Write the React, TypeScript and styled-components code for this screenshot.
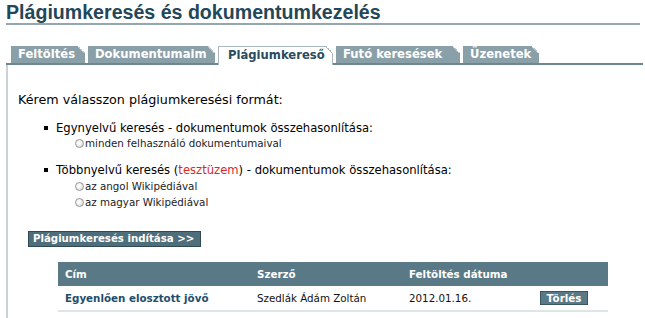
import styled, { createGlobalStyle } from "styled-components";

const GlobalStyle = createGlobalStyle`
  body {
    margin: 0;
    background: #fff;
    color: #000;
    font-family: "DejaVu Sans", Verdana, sans-serif;
  }
`;

const Page = styled.div`
  width: 645px;
  height: 318px;
  overflow: hidden;
`;

const Title = styled.h1`
  margin: 2px 5px 0 6px;
  font: bold 19.6px/21px "Liberation Sans", Arial, sans-serif;
  color: #234659;
  border-bottom: 2px solid #93a7af;
`;

const TabBar = styled.div`
  display: flex;
  align-items: flex-end;
  gap: 3px;
  margin: 21px 2px 0 6px;
  padding-left: 5px;
  height: 17px;
  border-bottom: 2px solid #6d8791;
`;

const Tab = styled.div<{ $active?: boolean; $width: number }>`
  position: relative;
  box-sizing: border-box;
  width: ${(p) => p.$width}px;
  height: ${(p) => (p.$active ? "19px" : "17px")};
  margin-bottom: ${(p) => (p.$active ? "-2px" : "0")};
  padding: ${(p) => (p.$active ? "0 0 1px 9px" : "0 0 0 7px")};
  line-height: ${(p) => (p.$active ? "16px" : "17px")};
  font-size: 11.6px;
  font-weight: bold;
  color: ${(p) => (p.$active ? "#2b4b5c" : "#fff")};
  background: ${(p) => (p.$active ? "#fff" : "#8aa0a8")};
  border: ${(p) => (p.$active ? "1px solid #a9b8be" : "none")};
  border-bottom: none;
  white-space: nowrap;

  &::after {
    content: "";
    position: absolute;
    top: ${(p) => (p.$active ? "-1px" : "0")};
    right: ${(p) => (p.$active ? "-1px" : "0")};
    width: 7px;
    height: 7px;
    background: linear-gradient(
      to bottom left,
      #fff 50%,
      ${(p) => (p.$active ? "#a9b8be" : "#b7c5ca")} 50%,
      ${(p) => (p.$active ? "#a9b8be" : "#b7c5ca")} calc(50% + 1px),
      transparent calc(50% + 1px)
    );
  }
`;

const Panel = styled.div`
  margin-left: 6px;
  border-left: 2px solid #c9d3d7;
  padding: 27px 0 20px 10px;
  min-height: 240px;
`;

const Intro = styled.p`
  margin: 0;
  font-size: 12.7px;
  line-height: 15px;
`;

const OptionList = styled.ul`
  list-style: none;
  margin: 13px 0 0 26px;
  padding: 0;
`;

const Option = styled.li`
  margin-bottom: 11px;
`;

const OptionHead = styled.div`
  display: flex;
  align-items: center;
  height: 15px;
  font-size: 11.6px;
`;

const Bullet = styled.span`
  width: 4px;
  height: 4px;
  margin-right: 8px;
  background: #000;
`;

const Test = styled.span`
  color: #d42a2a;
`;

const RadioGroup = styled.div<{ $offset?: number }>`
  padding-top: ${(p) => p.$offset ?? 0}px;
`;

const RadioRow = styled.label`
  display: flex;
  align-items: center;
  gap: 1px;
  height: 16px;
  margin-left: 31px;
  font-size: 10.3px;
  color: #222;
`;

const Radio = styled.input`
  appearance: none;
  box-sizing: border-box;
  width: 9px;
  height: 9px;
  margin: 0;
  border-radius: 50%;
  border: 1px solid #969696;
  background: radial-gradient(circle at 40% 40%, #fff 0, #f0f0f0 45%, #c8c8c8 100%);
`;

const StartButton = styled.button`
  display: block;
  box-sizing: border-box;
  height: 16px;
  margin: 21px 0 0 10px;
  padding: 0 6px 0 4px;
  font-family: "DejaVu Sans", Verdana, sans-serif;
  font-size: 10.2px;
  font-weight: bold;
  line-height: 14px;
  color: #fff;
  background: #4e6e7b;
  border: 1px solid #2f4a55;
  border-radius: 0;
`;

const Table = styled.div`
  width: 550px;
  margin: 15px 0 0 40px;
`;

const Row = styled.div<{ $head?: boolean }>`
  display: grid;
  grid-template-columns: 192px 152px 131px 75px;
  align-items: center;
  height: 24px;
  font-size: 10.3px;
  font-weight: ${(p) => (p.$head ? "bold" : "normal")};
  color: ${(p) => (p.$head ? "#fff" : "#111")};
  background: ${(p) => (p.$head ? "#587985" : "#fff")};
  border-bottom: ${(p) => (p.$head ? "none" : "2px solid #dfe4e6")};
`;

const Cell = styled.div`
  padding-left: 7px;
  white-space: nowrap;
`;

const DocLink = styled.a`
  color: #1e4e6c;
  font-weight: bold;
  text-decoration: none;
`;

const DeleteButton = styled.button`
  box-sizing: border-box;
  width: 48px;
  height: 14px;
  padding: 0;
  font-family: "DejaVu Sans", Verdana, sans-serif;
  font-size: 10.3px;
  font-weight: bold;
  line-height: 12px;
  color: #fff;
  background: #587985;
  border: 1px solid #3b5661;
  border-radius: 0;
`;

const tabs = [
  { label: "Feltöltés", width: 74 },
  { label: "Dokumentumaim", width: 127 },
  { label: "Plágiumkereső", width: 115 },
  { label: "Futó keresések", width: 124 },
  { label: "Üzenetek", width: 76 },
];

export default function App() {
  return (
    <Page>
      <GlobalStyle />
      <Title>Plágiumkeresés és dokumentumkezelés</Title>
      <TabBar>
        {tabs.map((t) => (
          <Tab key={t.label} $width={t.width} $active={t.label === "Plágiumkereső"}>
            {t.label}
          </Tab>
        ))}
      </TabBar>
      <Panel>
        <Intro>Kérem válasszon plágiumkeresési formát:</Intro>
        <OptionList>
          <Option>
            <OptionHead>
              <Bullet />
              Egynyelvű keresés - dokumentumok összehasonlítása:
            </OptionHead>
            <RadioGroup>
              <RadioRow>
                <Radio type="radio" name="mode" />
                minden felhasználó dokumentumaival
              </RadioRow>
            </RadioGroup>
          </Option>
          <Option>
            <OptionHead>
              <Bullet />
              Többnyelvű keresés (<Test>tesztüzem</Test>) - dokumentumok összehasonlítása:
            </OptionHead>
            <RadioGroup $offset={1}>
              <RadioRow>
                <Radio type="radio" name="mode" />
                az angol Wikipédiával
              </RadioRow>
              <RadioRow>
                <Radio type="radio" name="mode" />
                az magyar Wikipédiával
              </RadioRow>
            </RadioGroup>
          </Option>
        </OptionList>
        <StartButton>Plágiumkeresés indítása &gt;&gt;</StartButton>
        <Table>
          <Row $head>
            <Cell>Cím</Cell>
            <Cell>Szerző</Cell>
            <Cell>Feltöltés dátuma</Cell>
            <Cell />
          </Row>
          <Row>
            <Cell>
              <DocLink href="#">Egyenlően elosztott jövő</DocLink>
            </Cell>
            <Cell>Szedlák Ádám Zoltán</Cell>
            <Cell>2012.01.16.</Cell>
            <Cell>
              <DeleteButton>Törlés</DeleteButton>
            </Cell>
          </Row>
        </Table>
      </Panel>
    </Page>
  );
}
